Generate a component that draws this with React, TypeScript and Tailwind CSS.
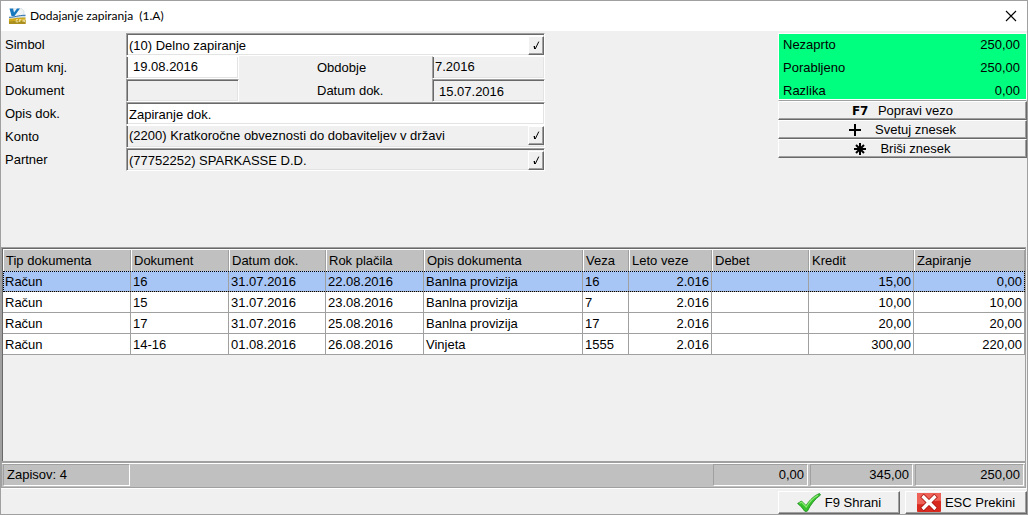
import React from "react";

const sunken =
    "border border-t-[#a0a0a0] border-l-[#a0a0a0] border-b-white border-r-white pt-0.5 shadow-[inset_1px_1px_0_#696969,inset_-1px_-1px_0_#e3e3e3]";
const sunkenOpen =
    "border border-t-white border-l-[#a0a0a0] border-b-white border-r-white pb-0.5 shadow-[inset_1px_0_0_#696969,inset_-1px_-1px_0_#e3e3e3]";
const raised =
    "border border-t-white border-l-white border-b-[#696969] border-r-[#696969] shadow-[inset_-1px_-1px_0_#a0a0a0]";

type Row = {
    type: string;
    doc: string;
    date: string;
    due: string;
    desc: string;
    link: string;
    year: string;
    debit: string;
    credit: string;
    closing: string;
};

const rows: Row[] = [
    { type: "Račun", doc: "16", date: "31.07.2016", due: "22.08.2016", desc: "Banlna provizija", link: "16", year: "2.016", debit: "", credit: "15,00", closing: "0,00" },
    { type: "Račun", doc: "15", date: "31.07.2016", due: "23.08.2016", desc: "Banlna provizija", link: "7", year: "2.016", debit: "", credit: "10,00", closing: "10,00" },
    { type: "Račun", doc: "17", date: "31.07.2016", due: "25.08.2016", desc: "Banlna provizija", link: "17", year: "2.016", debit: "", credit: "20,00", closing: "20,00" },
    { type: "Račun", doc: "14-16", date: "01.08.2016", due: "26.08.2016", desc: "Vinjeta", link: "1555", year: "2.016", debit: "", credit: "300,00", closing: "220,00" },
];

const columns: { key: keyof Row; title: string; width: string; right?: boolean }[] = [
    { key: "type", title: "Tip dokumenta", width: "w-[128px]" },
    { key: "doc", title: "Dokument", width: "w-[98px]" },
    { key: "date", title: "Datum dok.", width: "w-[97px]" },
    { key: "due", title: "Rok plačila", width: "w-[98px]" },
    { key: "desc", title: "Opis dokumenta", width: "" },
    { key: "link", title: "Veza", width: "w-[46px]" },
    { key: "year", title: "Leto veze", width: "w-[83px]", right: true },
    { key: "debit", title: "Debet", width: "w-[97px]", right: true },
    { key: "credit", title: "Kredit", width: "w-[105px]", right: true },
    { key: "closing", title: "Zapiranje", width: "w-[111px]", right: true },
];

const summary = [
    { label: "Nezaprto", value: "250,00" },
    { label: "Porabljeno", value: "250,00" },
    { label: "Razlika", value: "0,00" },
];

const AppIcon = () => (
    <svg width="17" height="16" viewBox="0 0 17 16" aria-hidden="true">
        <path d="M4 0h8l3 3v6H4z" fill="#f1f4f6" stroke="#c9d3da" strokeWidth="0.6" />
        <path d="M0.500 0.500h3.500l1 4L8 0.500h3L5.500 8H2.500z" fill="#1878bd" />
        <path d="M0 9c5 0 9-2 16.500-2.500V10H0z" fill="#cfe0ef" />
        <path d="M0 9.300c6 0 9-2 16.500-2" fill="none" stroke="#2f70ad" strokeWidth="1" />
        <path d="M0 10.500c6 0 9-1.500 16.500-1V16H0z" fill="#d0a91c" />
        <path d="M0 13.500c6-1 10 0 16.500-1.500V16H0z" fill="#ab9020" />
        <path d="M9 11.500H7.200V14H9v-1M12.500 11.500h-2V14M10.500 12.800H12M14 14v-2.500L15.500 14v-2.500" fill="none" stroke="#f7edb8" strokeWidth="0.7" />
    </svg>
);

const PickButton = ({ label }: { label: string }) => (
    <button type="button" aria-label={label} className={`flex w-4 items-center justify-center bg-[#f0f0f0] ${raised}`}>
        <svg width="7" height="9" viewBox="0 0 7 9" aria-hidden="true">
            <path d="M0.800 5.500L2.200 8L5.800 0.600" fill="none" stroke="#000" strokeWidth="1" />
            <path d="M1.500 5v3" stroke="#000" strokeWidth="1" />
        </svg>
    </button>
);

type FieldProps = {
    id: string;
    value: string;
    white?: boolean;
    pick?: string;
    inset?: boolean;
    open?: boolean;
    className: string;
};

const Field = ({ id, value, white, pick, inset, open, className }: FieldProps) => (
    <div className={`flex h-[23px] pl-0.5 ${white ? "bg-white" : "bg-[#f0f0f0]"} ${open ? sunkenOpen : sunken} ${className}`}>
        <input
            id={id}
            defaultValue={value}
            readOnly={!white}
            className={`min-w-0 flex-1 bg-transparent outline-none ${inset ? "pl-1" : ""}`}
        />
        {pick && <PickButton label={pick} />}
    </div>
);

const FormLabel = ({ id, children }: { id: string; children: React.ReactNode }) => (
    <label htmlFor={id} className="w-[121px] shrink-0">
        {children}
    </label>
);

const ActionButton = ({ icon, children }: { icon: React.ReactNode; children: React.ReactNode }) => (
    <button type="button" className={`flex h-[19px] w-full items-center justify-center bg-[#f0f0f0] ${raised}`}>
        <span className="flex w-[26px] items-center">{icon}</span>
        {children}
    </button>
);

const TotalCell = ({ width, children }: { width: string; children: React.ReactNode }) => (
    <div className={`border border-t-[#a0a0a0] border-l-[#a0a0a0] border-b-white border-r-white px-[3px] leading-5 ${width}`}>
        {children}
    </div>
);

const App = () => {
    return (
        <div className="flex min-h-screen flex-col border border-[#a0a0a0] bg-[#f0f0f0] font-['Liberation_Sans',Arial,sans-serif] text-[13px] leading-[19px] text-black">
            {/* Title bar */}
            <header className="flex h-[30px] items-center bg-white pr-2 pl-2">
                <AppIcon />
                <h1 className="ml-1 flex-1 font-[Lato,sans-serif] text-xs whitespace-pre">Dodajanje zapiranja  (1.A)</h1>
                <button type="button" aria-label="Zapri" className="flex size-4 items-center justify-center">
                    <svg width="12" height="12" viewBox="0 0 12 12" aria-hidden="true">
                        <path d="M1 1l10 10M11 1L1 11" stroke="#000" strokeWidth="1.100" />
                    </svg>
                </button>
            </header>

            {/* Form and summary */}
            <section className="mb-[76px] flex items-start justify-between gap-4 pt-0.5 pl-1">
                <form className="w-full max-w-[540px]">
                    <div className="flex items-center">
                        <FormLabel id="simbol">Simbol</FormLabel>
                        <Field id="simbol" value="(10) Delno zapiranje" white pick="Izberi simbol" className="flex-1" />
                    </div>
                    <div className="flex items-center">
                        <FormLabel id="datum-knj">Datum knj.</FormLabel>
                        <Field id="datum-knj" value="19.08.2016" white inset open className="w-[113px]" />
                        <label htmlFor="obdobje" className="ml-auto w-[115px]">
                            Obdobje
                        </label>
                        <Field id="obdobje" value="7.2016" open className="w-[113px]" />
                    </div>
                    <div className="flex items-center">
                        <FormLabel id="dokument">Dokument</FormLabel>
                        <Field id="dokument" value="" className="w-[113px]" />
                        <label htmlFor="datum-dok" className="ml-auto w-[115px]">
                            Datum dok.
                        </label>
                        <Field id="datum-dok" value="15.07.2016" inset className="w-[113px]" />
                    </div>
                    <div className="flex items-center">
                        <FormLabel id="opis">Opis dok.</FormLabel>
                        <Field id="opis" value="Zapiranje dok." white className="flex-1" />
                    </div>
                    <div className="flex items-center">
                        <FormLabel id="konto">Konto</FormLabel>
                        <Field id="konto" value="(2200) Kratkoročne obveznosti do dobaviteljev v državi" pick="Izberi konto" open className="flex-1" />
                    </div>
                    <div className="flex items-center">
                        <FormLabel id="partner">Partner</FormLabel>
                        <Field id="partner" value="(77752252) SPARKASSE D.D." pick="Izberi partnerja" className="flex-1" />
                    </div>
                </form>

                <aside className="w-[249px] shrink-0">
                    <dl className="flex flex-col gap-1 border border-white border-b-[#a0a0a0] bg-[#00ff7f] pt-px pr-1.5 pl-1 shadow-[inset_0_-1px_0_#fff]">
                        {summary.map((item) => (
                            <div key={item.label} className="flex justify-between">
                                <dt>{item.label}</dt>
                                <dd>{item.value}</dd>
                            </div>
                        ))}
                    </dl>
                    <ActionButton icon={<span className="font-['DejaVu_Sans',sans-serif] text-xs font-bold">F7</span>}>
                        Popravi vezo
                    </ActionButton>
                    <ActionButton
                        icon={
                            <svg width="12" height="12" viewBox="0 0 12 12" aria-hidden="true">
                                <path d="M6 0v12M0 6h12" stroke="#000" strokeWidth="2" />
                            </svg>
                        }
                    >
                        Svetuj znesek
                    </ActionButton>
                    <ActionButton
                        icon={
                            <svg width="12" height="12" viewBox="0 0 12 12" aria-hidden="true">
                                <path d="M6 0v12M0 6h12M2 2l8 8M10 2l-8 8" stroke="#000" strokeWidth="2" />
                            </svg>
                        }
                    >
                        Briši znesek
                    </ActionButton>
                </aside>
            </section>

            {/* Documents grid */}
            <section className="mr-px flex flex-1 flex-col border-t border-r border-l border-[#a0a0a0]">
                <div className="flex-1 border-t border-l border-[#696969]">
                    <table className="w-full table-fixed border-separate border-spacing-0">
                        <thead>
                            <tr>
                                {columns.map((col) => (
                                    <th
                                        key={col.key}
                                        className={`h-[22px] border-t border-l border-white bg-[#c0c0c0] p-0 pl-0.5 text-left font-normal whitespace-nowrap shadow-[inset_-1px_0_0_#a0a0a0] ${col.width}`}
                                    >
                                        {col.title}
                                    </th>
                                ))}
                            </tr>
                        </thead>
                        <tbody>
                            {rows.map((row, i) => (
                                <tr
                                    key={row.doc}
                                    className={i === 0 ? "bg-[#a8c6f5] outline-1 -outline-offset-1 outline-dotted outline-black" : "bg-white"}
                                >
                                    {columns.map((col) => (
                                        <td
                                            key={col.key}
                                            className={`h-[21px] border-r border-b border-[#a0a0a0] px-0.5 py-0 whitespace-nowrap ${col.right ? "text-right" : ""}`}
                                        >
                                            {row[col.key]}
                                        </td>
                                    ))}
                                </tr>
                            ))}
                        </tbody>
                    </table>
                </div>

                {/* Totals */}
                <div className="flex gap-0.5 border-t-2 border-b border-[#a0a0a0] bg-[#c0c0c0] px-px pt-px pb-px shadow-[inset_0_1px_0_#fff]">
                    <TotalCell width="w-[127px]">Zapisov: 4</TotalCell>
                    <div className="flex-1" />
                    <TotalCell width="w-[95px] text-right">0,00</TotalCell>
                    <TotalCell width="w-[103px] text-right">345,00</TotalCell>
                    <TotalCell width="w-[109px] text-right">250,00</TotalCell>
                </div>
            </section>

            <footer className="flex justify-end gap-[5px] border-t border-white pt-0.5">
                <button type="button" className={`flex h-[23px] w-[122px] items-center justify-center gap-1 bg-[#f0f0f0] ${raised}`}>
                    <svg width="24" height="19" viewBox="0 0 24 19" aria-hidden="true">
                        <path d="M0.600 10.500L4.500 8L9 12.500C13 6.500 17.500 2.500 22.500 0.500L23.500 2C18 6 13.500 11.500 10.500 18C9.500 18.700 8.300 18.700 7.500 18C5.500 15 3.200 12.500 0.600 10.500z" fill="#35c02c" stroke="#188a17" strokeWidth="0.800" />
                        <path d="M2.500 10.300L4.500 9.200L9.200 14C12.500 8.500 17 4.300 21 2.200" fill="none" stroke="#8bea72" strokeWidth="1.200" />
                    </svg>
                    F9 Shrani
                </button>
                <button type="button" className={`flex h-[23px] w-[122px] items-center justify-center gap-1 bg-[#f0f0f0] ${raised}`}>
                    <svg width="24" height="19" viewBox="0 0 24 19" aria-hidden="true">
                        <rect width="24" height="19" rx="1" fill="#d92a20" />
                        <path d="M0 1a1 1 0 0 1 1-1h22a1 1 0 0 1 1 1v7C16 6 8 13 0 11z" fill="#ee6258" />
                        <path d="M5 2.500L19 16.500M19 2.500L5 16.500" stroke="#a8150f" strokeWidth="5" />
                        <path d="M5.500 3L18.500 16M18.500 3L5.500 16" stroke="#fff" strokeWidth="3.400" />
                    </svg>
                    ESC Prekini
                </button>
            </footer>
        </div>
    );
};

export default App;
